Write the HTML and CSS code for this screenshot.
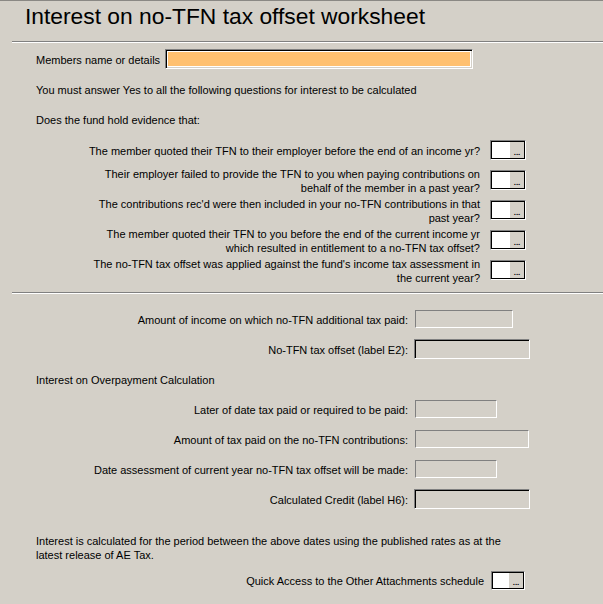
FILE: index.html
```html
<!DOCTYPE html>
<html lang="en">
<head>
    <meta charset="UTF-8">
    <title>Interest on no-TFN tax offset worksheet</title>
    <link rel="stylesheet" href="styles.css">
</head>

<body>
<div class="sheet">
    <h1 class="title">Interest on no-TFN tax offset worksheet</h1>
    <div class="rule"></div>

    <div class="intro">
        <div class="row">
            <label class="member-label">Members name or details</label>
            <div class="entry"></div>
        </div>
        <div class="row">You must answer Yes to all the following questions for interest to be calculated</div>
        <div class="row">Does the fund hold evidence that:</div>
    </div>

    <div class="questions">
        <div class="q">
            <span class="q-text">The member quoted their TFN to their employer before the end of an income yr?</span>
            <span class="pick"><span class="pick-btn">...</span></span>
        </div>
        <div class="q">
            <span class="q-text">Their employer failed to provide the TFN to you when paying contributions on<br>behalf of the member in a past year?</span>
            <span class="pick"><span class="pick-btn">...</span></span>
        </div>
        <div class="q">
            <span class="q-text">The contributions rec'd were then included in your no-TFN contributions in that<br>past year?</span>
            <span class="pick"><span class="pick-btn">...</span></span>
        </div>
        <div class="q">
            <span class="q-text">The member quoted their TFN to you before the end of the current income yr<br>which resulted in entitlement to a no-TFN tax offset?</span>
            <span class="pick"><span class="pick-btn">...</span></span>
        </div>
        <div class="q">
            <span class="q-text">The no-TFN tax offset was applied against the fund's income tax assessment in<br>the current year?</span>
            <span class="pick"><span class="pick-btn">...</span></span>
        </div>
    </div>

    <div class="rule rule-mid"></div>

    <div class="fields">
        <div class="field">
            <span class="field-label">Amount of income on which no-TFN additional tax paid:</span>
            <span class="box box-mid"></span>
        </div>
        <div class="field">
            <span class="field-label">No-TFN tax offset (label E2):</span>
            <span class="box box-sunk"></span>
        </div>
        <div class="field field-head">Interest on Overpayment Calculation</div>
        <div class="field">
            <span class="field-label">Later of date tax paid or required to be paid:</span>
            <span class="box box-short"></span>
        </div>
        <div class="field">
            <span class="field-label">Amount of tax paid on the no-TFN contributions:</span>
            <span class="box box-wide"></span>
        </div>
        <div class="field">
            <span class="field-label">Date assessment of current year no-TFN tax offset will be made:</span>
            <span class="box box-short"></span>
        </div>
        <div class="field">
            <span class="field-label">Calculated Credit (label H6):</span>
            <span class="box box-sunk"></span>
        </div>
    </div>

    <p class="footnote">Interest is calculated for the period between the above dates using the published rates as at the<br>latest release of AE Tax.</p>

    <div class="q quick">
        <span class="q-text">Quick Access to the Other Attachments schedule</span>
        <span class="pick"><span class="pick-btn">...</span></span>
    </div>
</div>
</body>
</html>
```

FILE: styles.css
```css
html{background: #d4d0c8}
body{margin: 0; color: #000; font: 11px "Liberation Sans", Arial, sans-serif}
p{margin: 0}

.sheet{border-top: 1px solid #8a8884; min-height: 603px}
.title{margin: 1px 0 0; padding-left: 25px; font-size: 22.8px; font-weight: normal; line-height: 28px}
.rule{margin: 11px 0 0 12px; border-top: 1px solid #808080; border-bottom: 1px solid #fff}
.rule-mid{margin-top: 8px}

.intro{display: flex; flex-direction: column; gap: 10px; margin-top: 6px; padding-left: 36px}
.row{display: flex; align-items: center; height: 20px; box-sizing: border-box; padding-top: 2px}
.row:first-child{padding-top: 0}
.member-label{margin-right: 5px; padding-top: 2px}
.entry{width: 308px; height: 20px; box-sizing: border-box; border: 1px solid; border-color: #808080 #fff #fff #808080; background: #ffc06f; box-shadow: inset 1px 1px 0 #000, inset -1px -1px 0 #d4d0c8, inset 0 0 0 2px #fff}

.questions{display: flex; flex-direction: column; gap: 2px; margin-top: 7px; padding-left: 36px}
.q{display: flex; align-items: center; height: 28px}
.q-text{width: 444px; margin-right: 10px; padding-top: 2px; text-align: right; line-height: 14px}
.pick{display: flex; justify-content: flex-end; width: 36px; height: 20px; box-sizing: border-box; padding: 1px; border: 1px solid; border-color: #808080 #fff #fff #808080; background: #fff; box-shadow: inset 0 0 0 1px #000}
.pick-btn{display: flex; align-items: flex-end; justify-content: center; width: 14px; background: #d4d0c8; font-size: 8px; font-weight: bold; line-height: 11px}

.fields{display: flex; flex-direction: column; gap: 10px; margin-top: 15px; padding-left: 36px}
.field{display: flex; align-items: center; height: 20px}
.field-head{box-sizing: border-box; padding-top: 2px}
.field-label{width: 372px; margin-right: 6px; padding-top: 2px; text-align: right}
.box{height: 18px; margin-left: 1px; box-sizing: border-box; border: 1px solid; border-color: #808080 #fff #fff #808080}
.box-mid{width: 98px}
.box-short{width: 82px}
.box-wide{width: 114px}
.box-sunk{width: 116px; height: 20px; margin-left: 0; box-shadow: inset 1px 1px 0 #000, inset -1px -1px 0 #d4d0c8}

.footnote{margin-top: 25px; padding-left: 36px; line-height: 14px}

.quick{height: 20px; margin-top: 8px; padding-left: 36px}
.quick .q-text{width: 448px; margin-right: 7px}
.quick .pick{width: 34px; height: 19px}
```
